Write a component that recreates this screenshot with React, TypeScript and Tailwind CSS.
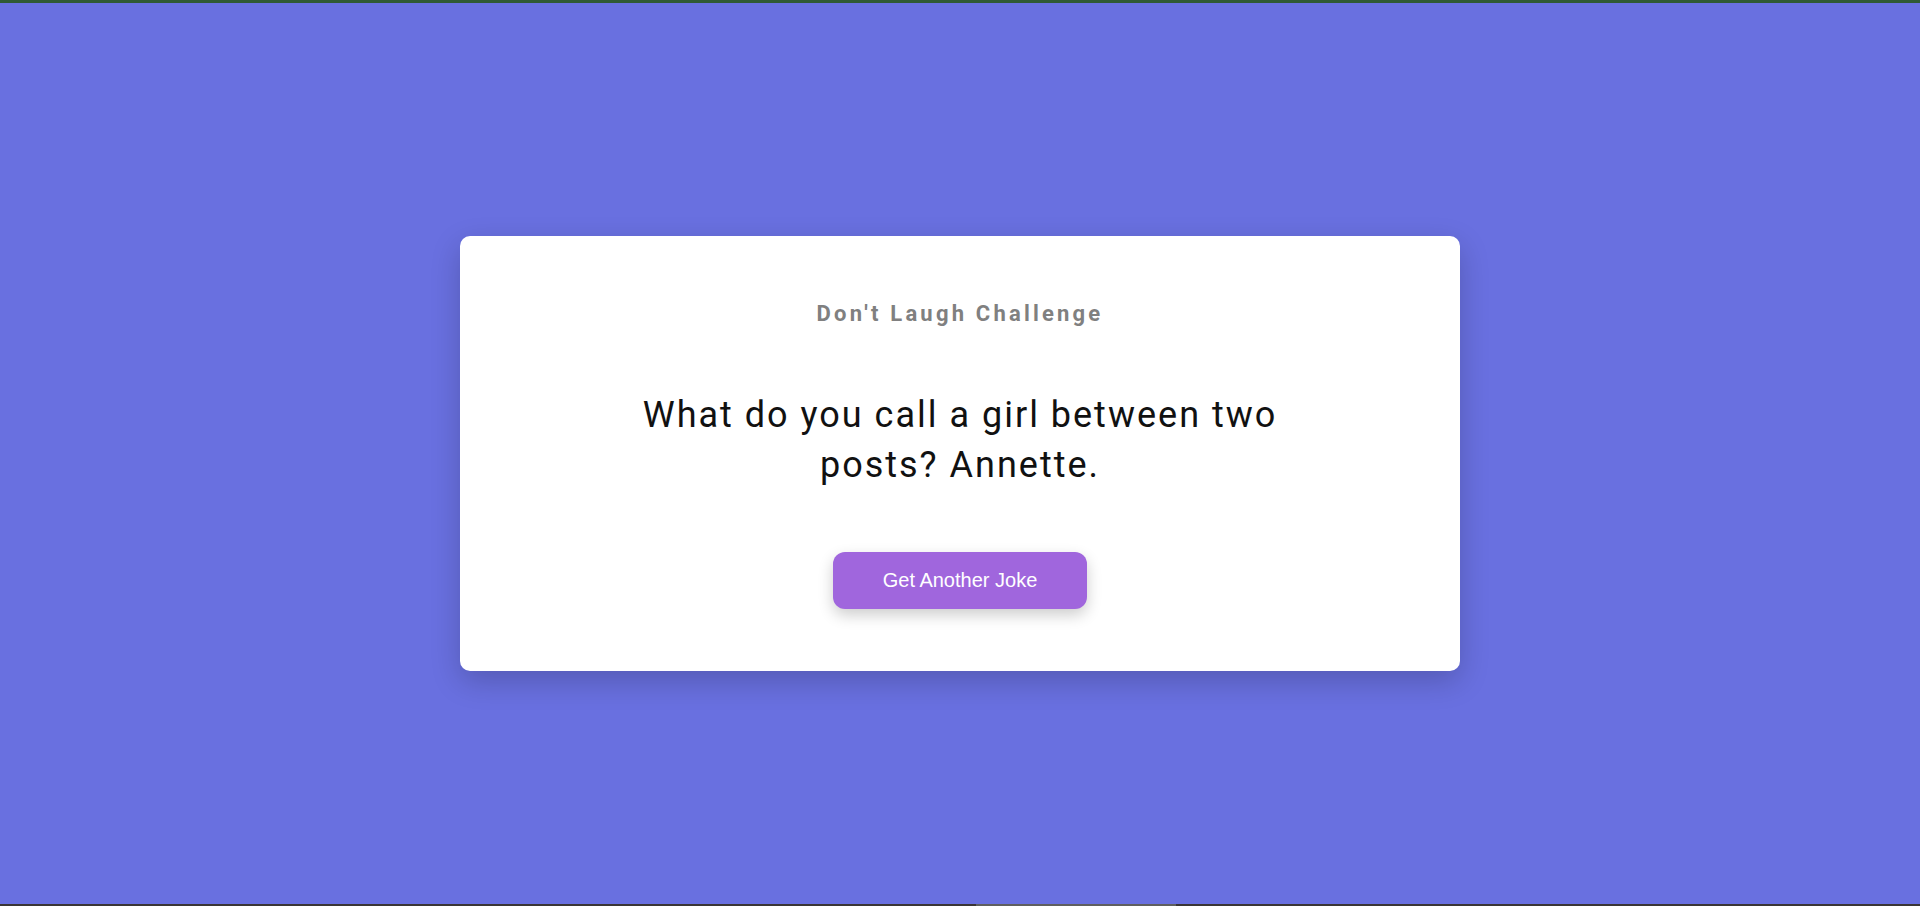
import React from 'react';

export default function App() {
  return (
    <div className="flex h-[906px] w-full flex-col bg-[#6970e0]">
      {/* window chrome strip */}
      <div className="h-[3px] w-full bg-[#2f5a34]"></div>

      <main className="flex flex-1 items-center justify-center">
        <div className="flex w-[1000px] flex-col items-center rounded-[10px] bg-white pt-[61px] pb-[62px] shadow-[0_10px_30px_rgba(0,0,0,0.2)]">
          <h2 className="mb-[60px] text-[22px] leading-[33px] font-bold tracking-[3.2px] text-[#808080] font-['Roboto',sans-serif]">
            Don't Laugh Challenge
          </h2>

          <p className="mb-[62px] max-w-[700px] text-center text-[36px] leading-[1.4] tracking-[2px] text-[#111] font-['Roboto',sans-serif]">
            What do you call a girl between two posts? Annette.
          </p>

          <button className="rounded-[12px] bg-[#a066dd] px-[50px] py-[17px] text-[20px] leading-[23px] text-white shadow-[0_6px_15px_rgba(0,0,0,0.2)] font-['Liberation_Sans',Arial,sans-serif]">
            Get Another Joke
          </button>
        </div>
      </main>

      {/* bottom taskbar strip */}
      <div className="flex h-[2px] w-full bg-[#3a3535]">
        <div className="ml-[976px] h-full w-[200px] bg-[#5f5f5f]"></div>
      </div>
    </div>
  );
}
